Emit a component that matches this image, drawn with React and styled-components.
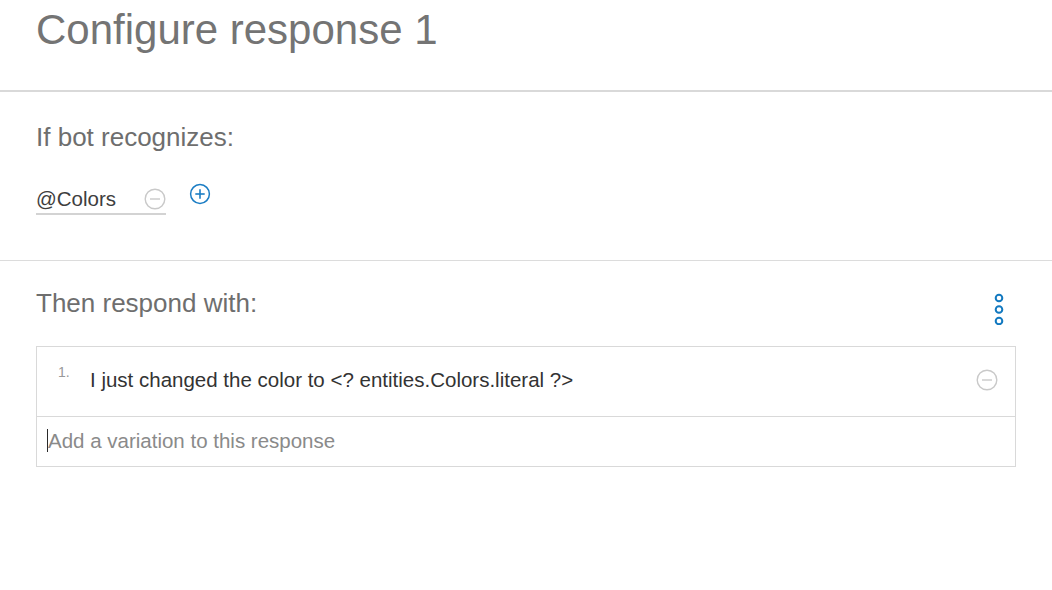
import React from "react";
import styled, { createGlobalStyle } from "styled-components";

const Global = createGlobalStyle`
  html, body { margin: 0; padding: 0; background: #ffffff; }
  body { font-family: "Liberation Sans", Arial, sans-serif; }
  * { box-sizing: border-box; }
`;

const Page = styled.div`
  width: 1052px;
  min-height: 590px;
  background: #fff;
`;

const Header = styled.header`
  height: 92px;
  padding: 6px 36px 0;
  border-bottom: 2px solid #d9d9d9;
`;

const Title = styled.h1`
  margin: 0;
  font-size: 42px;
  line-height: 48px;
  font-weight: 400;
  color: #747474;
`;

const Section = styled.section`
  padding: ${(p) => p.$pad};
  border-bottom: ${(p) => (p.$divider ? "1px solid #dcdcdc" : "none")};
`;

const SectionHead = styled.div`
  display: flex;
  justify-content: space-between;
  align-items: flex-start;
  height: 30px;
`;

const Label = styled.h2`
  margin: 0;
  font-size: 26px;
  line-height: 30px;
  font-weight: 400;
  color: #6e6e6e;
`;

const EntityRow = styled.div`
  display: flex;
  align-items: flex-start;
  height: 28px;
  margin-top: 35px;
  gap: 23px;
`;

const EntityField = styled.div`
  width: 130px;
  display: flex;
  align-items: center;
  justify-content: space-between;
  padding-bottom: 2px;
  border-bottom: 2px solid #d3d3d3;
`;

const EntityText = styled.span`
  font-size: 20.5px;
  line-height: 24px;
  color: #3e3e3e;
`;

const IconButton = styled.button`
  display: flex;
  align-items: center;
  justify-content: center;
  padding: 0;
  margin: ${(p) => p.$margin || "0"};
  border: none;
  background: none;
  cursor: pointer;
  line-height: 0;
`;

const MenuButton = styled(IconButton)`
  margin: 3px 11px 0 0;
`;

const ResponseBox = styled.div`
  margin-top: 28px;
  border: 1px solid #d9d9d9;
`;

const ResponseRow = styled.div`
  display: flex;
  align-items: center;
  height: 70px;
  padding: 0 17px 4px 21px;
  border-bottom: 1px solid #d9d9d9;
`;

const Num = styled.span`
  align-self: flex-start;
  margin-top: 17px;
  width: 32px;
  font-size: 14px;
  line-height: 16px;
  color: #999999;
`;

const ResponseText = styled.span`
  flex: 1;
  font-size: 20.5px;
  line-height: 24px;
  color: #333333;
`;

const AddRow = styled.div`
  display: flex;
  align-items: center;
  height: 49px;
  padding: 0 10px 2px 10px;
`;

const Caret = styled.span`
  display: inline-block;
  width: 1px;
  height: 23px;
  background: #2a2a2a;
`;

const Placeholder = styled.span`
  font-size: 20.5px;
  line-height: 24px;
  color: #8a8a8a;
`;

const MinusIcon = () => (
  <svg width="22" height="22" viewBox="0 0 22 22">
    <circle cx="11" cy="11" r="9.8" fill="none" stroke="#c9c9c9" strokeWidth="1.4" />
    <line x1="6" y1="11" x2="16" y2="11" stroke="#c9c9c9" strokeWidth="1.4" />
  </svg>
);

const PlusIcon = () => (
  <svg width="22" height="22" viewBox="0 0 22 22">
    <circle cx="11" cy="11" r="9.4" fill="none" stroke="#1b7dc4" strokeWidth="1.5" />
    <line x1="6.3" y1="11" x2="15.7" y2="11" stroke="#1b7dc4" strokeWidth="1.6" />
    <line x1="11" y1="6.3" x2="11" y2="15.7" stroke="#1b7dc4" strokeWidth="1.6" />
  </svg>
);

const DotsIcon = () => (
  <svg width="12" height="34" viewBox="0 0 12 34">
    <circle cx="6" cy="7" r="3.3" fill="none" stroke="#1279c0" strokeWidth="2" />
    <circle cx="6" cy="18.5" r="3.3" fill="none" stroke="#1279c0" strokeWidth="2" />
    <circle cx="6" cy="30" r="3.3" fill="none" stroke="#1279c0" strokeWidth="2" />
  </svg>
);

export default function App() {
  return (
    <Page>
      <Global />
      <Header>
        <Title>Configure response 1</Title>
      </Header>

      <Section $pad="30px 36px 45px" $divider>
        <Label>If bot recognizes:</Label>
        <EntityRow>
          <EntityField>
            <EntityText>@Colors</EntityText>
            <IconButton aria-label="Remove condition">
              <MinusIcon />
            </IconButton>
          </EntityField>
          <IconButton $margin="-4px 0 0 0" aria-label="Add condition">
            <PlusIcon />
          </IconButton>
        </EntityRow>
      </Section>

      <Section $pad="27px 36px 0">
        <SectionHead>
          <Label>Then respond with:</Label>
          <MenuButton aria-label="More options">
            <DotsIcon />
          </MenuButton>
        </SectionHead>
        <ResponseBox>
          <ResponseRow>
            <Num>1.</Num>
            <ResponseText>I just changed the color to &lt;? entities.Colors.literal ?&gt;</ResponseText>
            <IconButton aria-label="Remove response">
              <MinusIcon />
            </IconButton>
          </ResponseRow>
          <AddRow>
            <Caret />
            <Placeholder>Add a variation to this response</Placeholder>
          </AddRow>
        </ResponseBox>
      </Section>
    </Page>
  );
}
